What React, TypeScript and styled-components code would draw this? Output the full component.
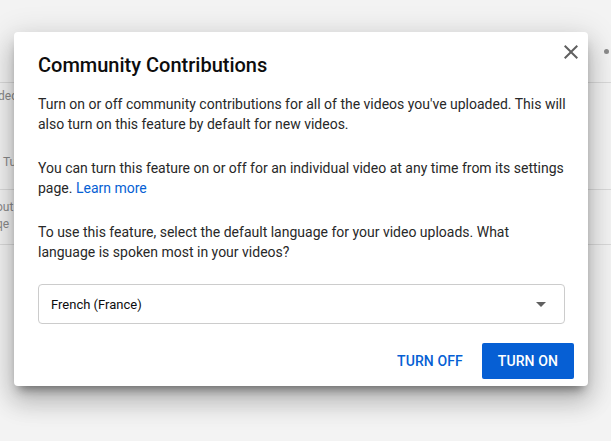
import React from "react";
import styled, { createGlobalStyle } from "styled-components";

const Global = createGlobalStyle`
  html, body { margin: 0; padding: 0; }
  body {
    background: #f3f3f3;
    font-family: Roboto, "Noto Sans", Arial, sans-serif;
    -webkit-font-smoothing: antialiased;
  }
  * { box-sizing: border-box; }
`;

const Screen = styled.div`
  position: relative;
  width: 611px;
  height: 441px;
  overflow: hidden;
  background: #f3f3f3;
`;

const BehindPage = styled.div`
  display: flex;
  flex-direction: column;
  width: 100%;
  color: #8a8a8a;
  font-size: 12px;
  line-height: 17px;
`;

const TopBar = styled.div`
  height: 83px;
  border-bottom: 1px solid #dadada;
  display: flex;
  justify-content: flex-end;
  align-items: flex-start;
  padding-top: 49px;
`;

const MenuDot = styled.span`
  width: 5px;
  height: 5px;
  border-radius: 50%;
  background: #8c8c8c;
  margin-right: 2px;
`;

const BehindRow = styled.div<{ $h: number }>`
  height: ${(p) => p.$h}px;
  border-bottom: 1px solid #dadada;
  display: flex;
  flex-direction: column;
  padding-top: 5px;
`;

const Frag = styled.span<{ $shift: number; $mt?: number }>`
  display: block;
  margin-left: ${(p) => p.$shift}px;
  margin-top: ${(p) => p.$mt ?? 0}px;
  white-space: nowrap;
`;

const Dialog = styled.div`
  position: absolute;
  left: 14px;
  top: 32px;
  width: 574px;
  height: 354px;
  background: #fff;
  border-radius: 4px;
  padding: 19px 24px 7px;
  display: flex;
  flex-direction: column;
  box-shadow: 0 16px 24px 2px rgba(0, 0, 0, 0.16),
    0 6px 30px 5px rgba(0, 0, 0, 0.12), 0 8px 10px -5px rgba(0, 0, 0, 0.45);
`;

const CloseButton = styled.button`
  position: absolute;
  top: 8px;
  right: 5px;
  width: 24px;
  height: 24px;
  padding: 0;
  border: none;
  background: transparent;
  display: flex;
  align-items: center;
  justify-content: center;
  color: #606060;
  cursor: pointer;
`;

const Title = styled.h2`
  margin: 0 0 15px;
  font-size: 20px;
  line-height: 28px;
  font-weight: 500;
  color: #0d0d0d;
`;

const Para = styled.p`
  margin: 0 -5px 24px 0;
  font-size: 14px;
  line-height: 20px;
  color: #282828;
  &:last-of-type {
    margin-bottom: 22px;
  }
`;

const Link = styled.a`
  color: #065fd4;
  text-decoration: none;
`;

const Select = styled.div`
  width: 527px;
  height: 40px;
  border: 1px solid #cccccc;
  border-radius: 4px;
  display: flex;
  align-items: center;
  justify-content: space-between;
  padding: 0 18px 0 12px;
  font-size: 13px;
  color: #0d0d0d;
`;

const Caret = styled.span`
  width: 0;
  height: 0;
  border-left: 5px solid transparent;
  border-right: 5px solid transparent;
  border-top: 5px solid #606060;
`;

const Actions = styled.div`
  margin-top: 19px;
  margin-right: -10px;
  display: flex;
  justify-content: flex-end;
  gap: 3px;
`;

const Button = styled.button<{ $primary?: boolean }>`
  height: 36px;
  padding: 0 16px;
  border: none;
  border-radius: 2px;
  font-family: Roboto, "Noto Sans", Arial, sans-serif;
  font-size: 14px;
  font-weight: 500;
  letter-spacing: 0.1px;
  text-transform: uppercase;
  cursor: pointer;
  background: ${(p) => (p.$primary ? "#065fd4" : "transparent")};
  color: ${(p) => (p.$primary ? "#ffffff" : "#065fd4")};
`;

export default function App() {
  return (
    <>
      <Global />
      <Screen>
        <BehindPage>
          <TopBar>
            <MenuDot />
          </TopBar>
          <BehindRow $h={107}>
            <Frag $shift={-2}>dec</Frag>
            <Frag $shift={3} $mt={49}>Tu</Frag>
          </BehindRow>
          <BehindRow $h={55}>
            <Frag $shift={-4} $mt={4}>out</Frag>
            <Frag $shift={-4}>qe</Frag>
          </BehindRow>
        </BehindPage>

        <Dialog role="dialog" aria-labelledby="cc-title">
          <CloseButton aria-label="Close">
            <svg width="24" height="24" viewBox="0 0 24 24" fill="currentColor">
              <path d="M19 6.41L17.59 5 12 10.59 6.41 5 5 6.41 10.59 12 5 17.59 6.41 19 12 13.41 17.59 19 19 17.59 13.41 12z" />
            </svg>
          </CloseButton>
          <Title id="cc-title">Community Contributions</Title>
          <Para>
            Turn on or off community contributions for all of the videos you've
            uploaded. This will also turn on this feature by default for new
            videos.
          </Para>
          <Para>
            You can turn this feature on or off for an individual video at any
            time from its settings page. <Link href="#">Learn more</Link>
          </Para>
          <Para>
            To use this feature, select the default language for your video
            uploads. What language is spoken most in your videos?
          </Para>
          <Select>
            <span>French (France)</span>
            <Caret />
          </Select>
          <Actions>
            <Button>Turn off</Button>
            <Button $primary>Turn on</Button>
          </Actions>
        </Dialog>
      </Screen>
    </>
  );
}
